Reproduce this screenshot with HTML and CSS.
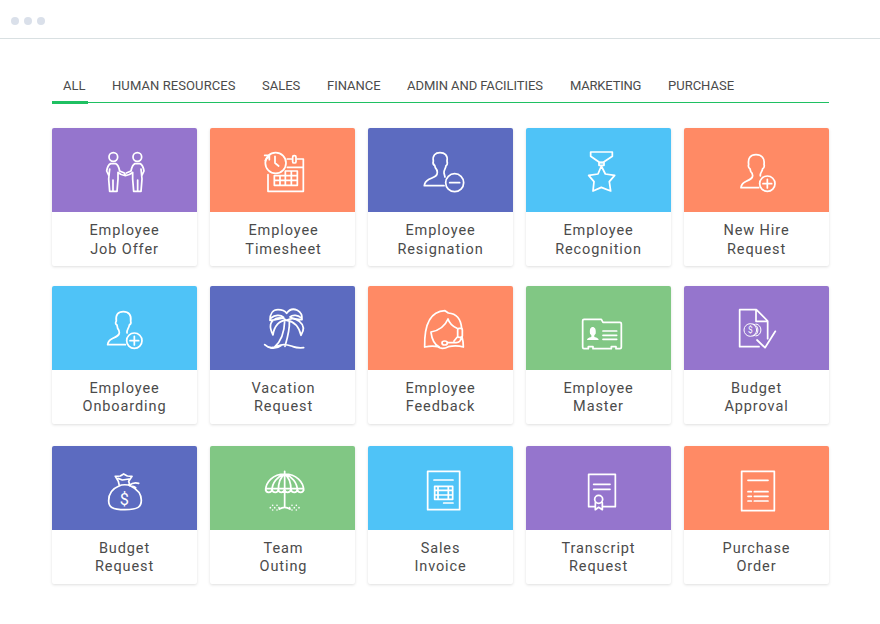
FILE: index.html
```html
<!DOCTYPE html>
<html lang="en">
<head>
<meta charset="utf-8">
<title>Form templates</title>
<link rel="stylesheet" href="styles.css">
</head>
<body>
<header class="window-bar"><i></i><i></i><i></i></header>
<nav class="tabs">
<a class="active">ALL</a><a class="hr">HUMAN RESOURCES</a><a class="sales">SALES</a><a class="finance">FINANCE</a><a class="admin">ADMIN AND FACILITIES</a><a class="marketing">MARKETING</a><a class="purchase">PURCHASE</a>
</nav>
<main class="grid">
<article class="card purple"><svg viewBox="-114 -36 435 252"><circle cx="70" cy="51" r="13"/><circle cx="142" cy="51" r="13"/><path d="M62 71h15q8 3 12 22l14 6 3 8q-14-2-22-10v20l-3 37H59l-3-37 3-30M62 71q-9 4-12 22l7 15M69 120v32M150 71h-15q-8 3-12 22l-14 6M106 107q14-2 22-10v20l3 37h22l3-37-3-30M150 71q9 4 12 22l-7 15M143 120v32"/></svg><h2>Employee<br>Job Offer</h2></article>
<article class="card orange shifted"><svg viewBox="360 -36 435 252"><circle cx="557" cy="69" r="31"/><path d="M555 49v20l11 9M524 46h14v13M538 47l-12 14M534 104v50h106V57h-18M604 57h-12M592 82h48M553 107h33V93h36v43h-69zM553 121h69M586 107h36M570 107v29M586 93v43M604 93v43"/><rect x="608" y="47" width="10" height="22" rx="4"/></svg><h2>Employee<br>Timesheet</h2></article>
<article class="card indigo"><svg viewBox="-126 -36 435 252"><path d="M102 137H43q1-12 14-19c16-8 25-9 25-21q0-7-6-14l-2-7c-3-1-6-6-4-13-3-17 6-25 20-25s24 8 21 25c2 7 0 12-3 14-1 10-7 13-6 22l3 12"/><circle cx="134" cy="128" r="27"/><path d="M119 128h30"/></svg><h2>Employee<br>Resignation</h2></article>
<article class="card sky"><svg viewBox="348 -36 435 252"><path d="M542 36h65v13l-27 18h-12l-26-18z"/><rect x="567" y="68" width="15" height="8"/><path d="M574 78l12 24 28 4-16 19 4 28-28-11-25 11 3-28-16-19 28-4z"/></svg><h2>Employee<br>Recognition</h2></article>
<article class="card orange"><svg viewBox="-138 -36 435 252"><path d="M86 143H33q1-12 13-18c15-7 22-10 22-18q0-7-6-13l-2-8c-4-2-6-6-4-13-3-18 5-29 22-29s27 11 24 29c2 7 0 11-4 13-1 10-8 11-7 22"/><circle cx="112" cy="131" r="23"/><path d="M112 118v26M99 131h26"/></svg><h2>New Hire<br>Request</h2></article>

<article class="card sky"><svg viewBox="-114 -36 435 252"><path d="M106 140H53q1-12 13-18c15-7 22-10 22-18q0-7-5-13l-2-10c-4-2-6-6-2-12-3-18 5-28 21-28s25 10 22 28c2 6 0 10-4 12-1 10-8 12-7 24"/><circle cx="133" cy="128" r="23"/><path d="M133 115v26M120 128h26"/></svg><h2>Employee<br>Onboarding</h2></article>
<article class="card indigo shifted"><svg viewBox="360 -36 435 252"><path d="M540 66c0-19 9-31 24-31 13 0 21 4 26 11 9-13 22-14 32-9 9 5 15 16 14 27M540 67c18-1 30-3 41-9-10-9-27-7-38 2M636 65c-15-1-26-3-36-8 9-8 24-5 33 2M590 67c-21-2-38 18-41 44-13-25-9-41 8-49 14-4 26-1 33 5 12-7 27-6 38 3 14 11 15 26 5 42-6-26-21-42-43-45zM584 70c-1 34-11 60-30 77M598 70c2 23-6 51-13 75M524 140c10 10 26 10 39 4 20-10 34-2 46 2 11 4 20 4 32 3M541 150q20 3 32-7"/></svg><h2>Vacation<br>Request</h2></article>
<article class="card orange"><svg viewBox="-126 -36 435 252"><path d="M44 146C43 91 55 40 105 38l10 7c27 2 38 23 40 46M44 147c17-4 28-4 39-1 6 6 20 7 32 0 17-4 29-4 45 1q0-17-4-31M114 63c-8 19-24 34-51 39M63 103c3 24 10 37 25 44M114 63c5 15 14 22 27 28M142 117l-10 12M154 117q-2 18-17 17h-24"/><rect x="143" y="91" width="14" height="27" rx="4"/><ellipse cx="104" cy="135" rx="8" ry="6"/></svg><h2>Employee<br>Feedback</h2></article>
<article class="card green"><svg viewBox="348 -36 435 252"><path d="M518 148V68q0-4 4-4h52l5 9h51q4 0 4 4v71q0 4-4 4h-12v-6h-14v6h-55v-6h-14v6h-13q-4 0-4-4zM579 99h41M579 112h41M579 124h41"/><path class="solid" d="M531 126q0-6 13-9v-5l-4-5c-2-14 2-20 8-20s11 6 9 20l-4 5v5q13 3 13 9z"/></svg><h2>Employee<br>Master</h2></article>
<article class="card purple"><svg viewBox="-123 -36 435 252"><path d="M102 146H44V35h50l34 34v53M93 35v35h35M96 126l24 23 31-49"/><g class="fine"><circle cx="76" cy="96" r="19"/><path d="M84 78c20 2 20 34 0 36M93 78c20 2 20 34 0 36"/></g><text x="76" y="104" class="coin">$</text></svg><h2>Budget<br>Approval</h2></article>

<article class="card indigo"><svg viewBox="-114 -42 435 252"><path d="M88 77l-3-13-9-15 15-1 10-6 11 6 14 1-10 15 4 14M84 55l13 5 20-3M87 78c-20 8-31 25-31 44 0 18 9 27 49 27s49-9 49-28c0-20-13-34-32-43-8-5-27-5-35 0M118 76c8-7 17-9 28-6M121 78c9 0 13 1 16 5"/><text x="103" y="134" class="money">$</text></svg><h2>Budget<br>Request</h2></article>
<article class="card green shifted"><svg viewBox="360 -42 435 252"><path d="M584 34v108M527 91c0-24 22-49 57-49s57 25 57 49M565 91c0-23 8-41 19-49 11 8 19 26 19 49M546 91c0-22 16-42 38-49 22 7 38 27 38 49M527 88q0 9 9 9t10-8q2 8 10 8t9-8q2 8 9 8t10-8q2 8 9 8t10-8q2 8 10 8t9-8q2 8 10 8t9-9M527 86h114M568 147q16-10 32 0"/><path class="dots" d="M548 136h0M561 136h0M541 143h0M554 143h0M567 143h0M548 150h0M561 150h0M606 136h0M619 136h0M599 143h0M613 143h0M627 143h0M606 150h0M619 150h0"/></svg><h2>Team<br>Outing</h2></article>
<article class="card sky"><svg viewBox="-126 -42 435 252"><path d="M53 34h96v115H53zM72 60h57M74 79h54v39H74zM84 79v39M115 79v39M74 91h54M74 105h54M101 129h28"/></svg><h2>Sales<br>Invoice</h2></article>
<article class="card purple"><svg viewBox="348 -42 435 252"><path d="M555 140h-19V43h80v97h-36M551 73h49M551 88h49M556 128v21l10-7 11 7v-21"/><circle cx="566" cy="118" r="12"/></svg><h2>Transcript<br>Request</h2></article>
<article class="card orange"><svg viewBox="-123 -42 435 252"><path d="M50 34h98v118H50zM69 61h60M69 95h10M88 95h41M69 109h10M88 109h41M69 123h10M88 123h41"/></svg><h2>Purchase<br>Order</h2></article>
</main>
</body>
</html>
```
FILE: styles.css
```css
* { box-sizing: border-box; }
body { margin: 0; height: 624px; overflow: hidden; background: #fff; color: #4b4b4b; font-family: Roboto, "Liberation Sans", sans-serif; }
.window-bar { height: 39px; padding: 17px 0 0 11px; display: flex; gap: 5px; border-bottom: 1px solid #d9e0e2; }
.window-bar i { width: 8px; height: 8px; border-radius: 50%; background: #dae0ea; }
.tabs { display: flex; margin: 33px 51px 0 52px; height: 31px; border-bottom: 1px solid #1fc062; }
.tabs a { height: 32px; padding-top: 5px; flex: none; font-size: 13px; line-height: 18px; white-space: nowrap; }
.tabs .active { width: 36px; margin-right: 24px; padding-left: 11px; border-bottom: 3px solid #1fc062; }
.hr { width: 150px; letter-spacing: 0.09px; }
.sales { width: 65px; }
.finance { width: 80px; }
.admin { width: 163px; letter-spacing: -0.06px; }
.marketing { width: 98px; letter-spacing: -0.2px; }
.grid { display: grid; grid-template-columns: repeat(5, 145px); grid-template-rows: 138px 138px 140px; column-gap: 13px; row-gap: 20px; margin: 25px 0 0 52px; }
.card { border-radius: 2px; background: #fff; box-shadow: 0 1px 3px rgba(0, 0, 0, .13); overflow: hidden; }
.card:nth-child(n+11) { margin-top: 2px; }
.card svg { display: block; width: 145px; height: 84px; fill: none; stroke: #fff; stroke-width: 5.2; stroke-linecap: round; stroke-linejoin: round; }
.card h2 { margin: 10px 0 0; font-size: 14.5px; line-height: 18px; font-weight: 400; letter-spacing: .9px; text-align: center; }
.card:nth-child(-n+5) h2 { line-height: 19px; margin-top: 9px; }
.card.shifted h2 { padding-left: 2px; }
.purple svg { background: #9575cd; }
.orange svg { background: #ff8a65; }
.indigo svg { background: #5c6bc0; }
.sky svg { background: #4fc3f7; }
.green svg { background: #81c784; }
.card .solid { fill: #fff; stroke: none; }
.card .fine { stroke-width: 3; }
.card .dots { stroke-width: 5; }
.card text { fill: #fff; stroke: none; text-anchor: middle; font-family: Roboto, sans-serif; }
.coin { font-size: 25px; }
.money { font-size: 49px; }
```
